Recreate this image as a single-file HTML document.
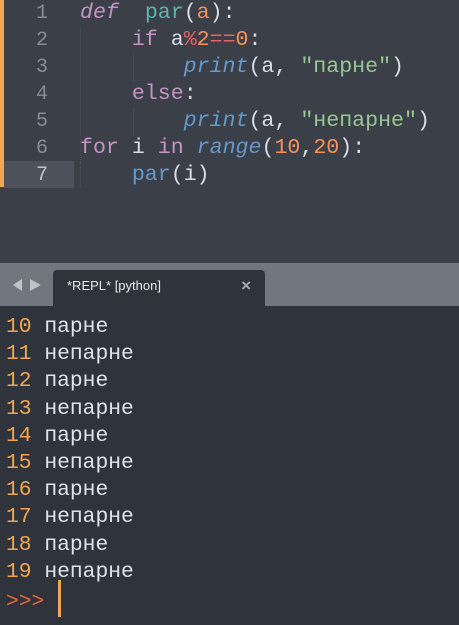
<!DOCTYPE html><html><head><style>
body{margin:0;width:459px;height:625px;overflow:hidden;background:#2f343c;font-family:"Liberation Mono",monospace;}
#ed{position:absolute;left:0;top:0;width:459px;height:263px;background:#3b4048;}
#bar{position:absolute;left:0;top:0;width:4px;height:187px;background:#f0a652;}
#hl{position:absolute;left:4px;top:161px;width:70px;height:27px;background:#4b525b;}
.ln{position:absolute;left:0;width:48px;text-align:right;color:#868d96;font-size:20px;line-height:27px;}
.cl{position:absolute;left:80px;font-size:21.6px;line-height:27px;color:#d8dee9;white-space:pre;}
.k{color:#c594c5}.f{color:#5fb3b3}.o{color:#f99157}.r{color:#ec5f67}.b{color:#6699cc}.s{color:#99c794}.i{font-style:italic}
.g{position:absolute;border-left:1px dotted #4a5059;width:0}
#tb{position:absolute;left:0;top:263px;width:459px;height:43px;background:#72767e;}
#tab{position:absolute;left:53px;top:270px;width:212px;height:36px;background:#2f343c;border-radius:4px 4px 0 0;}
#tab span{position:absolute;left:14px;top:8px;font-family:"Liberation Sans",sans-serif;font-size:13px;color:#e6e8eb}
#tab b{position:absolute;right:14px;top:6px;font-family:"Liberation Sans",sans-serif;font-size:17px;color:#a6abb2;font-weight:bold}
.out{position:absolute;left:6px;font-size:21.3px;height:27.2px;line-height:27.2px;white-space:pre;color:#dfe4ec;font-family:"Liberation Mono",monospace}
.n{color:#f0a652}
</style></head><body>
<div id="ed"></div><div id="bar"></div><div id="hl"></div>
<div class="g" style="left:80px;top:27px;height:135px"></div>
<div class="g" style="left:80px;top:162px;height:26px"></div>
<div class="g" style="left:133px;top:54px;height:27px"></div>
<div class="g" style="left:133px;top:108px;height:27px"></div>
<div class="ln" style="top:0">1</div><div class="ln" style="top:27px">2</div><div class="ln" style="top:54px">3</div><div class="ln" style="top:81px">4</div><div class="ln" style="top:108px">5</div><div class="ln" style="top:135px">6</div><div class="ln" style="top:162px;color:#c0c5cc">7</div>
<div class="cl" style="top:0"><span class="k i">def</span>  <span class="f">par</span>(<span class="o">a</span>):</div>
<div class="cl" style="top:27px">    <span class="k">if</span> a<span class="r">%</span><span class="o">2</span><span class="r">==</span><span class="o">0</span>:</div>
<div class="cl" style="top:54px">        <span class="b i">print</span>(a, <span class="s">"парне"</span>)</div>
<div class="cl" style="top:81px">    <span class="k">else</span>:</div>
<div class="cl" style="top:108px">        <span class="b i">print</span>(a, <span class="s">"непарне"</span>)</div>
<div class="cl" style="top:135px"><span class="k">for</span> i <span class="k">in</span> <span class="b i">range</span>(<span class="o">10</span>,<span class="o">20</span>):</div>
<div class="cl" style="top:162px">    <span class="b">par</span>(i)</div>
<div id="tb"><svg style="position:absolute;left:12px;top:15px" width="30" height="14"><polygon points="1,7 10,1 10,13" fill="#bfc3c8"/><polygon points="30,7 19,1 19,13" fill="#bfc3c8" transform="translate(-1,0)"/></svg></div>
<div id="tab"><span>*REPL* [python]</span><b>×</b></div>
<div class="out" style="top:314px"><span class="n">10</span> парне</div>
<div class="out" style="top:341.2px"><span class="n">11</span> непарне</div>
<div class="out" style="top:368.4px"><span class="n">12</span> парне</div>
<div class="out" style="top:395.6px"><span class="n">13</span> непарне</div>
<div class="out" style="top:422.8px"><span class="n">14</span> парне</div>
<div class="out" style="top:450px"><span class="n">15</span> непарне</div>
<div class="out" style="top:477.2px"><span class="n">16</span> парне</div>
<div class="out" style="top:504.4px"><span class="n">17</span> непарне</div>
<div class="out" style="top:531.6px"><span class="n">18</span> парне</div>
<div class="out" style="top:558.8px"><span class="n">19</span> непарне</div>
<div class="out" style="top:589px;color:#e8643c">&gt;&gt;&gt;</div>
<div style="position:absolute;left:58px;top:580px;width:3px;height:37px;background:#f0a652"></div>
</body></html>
